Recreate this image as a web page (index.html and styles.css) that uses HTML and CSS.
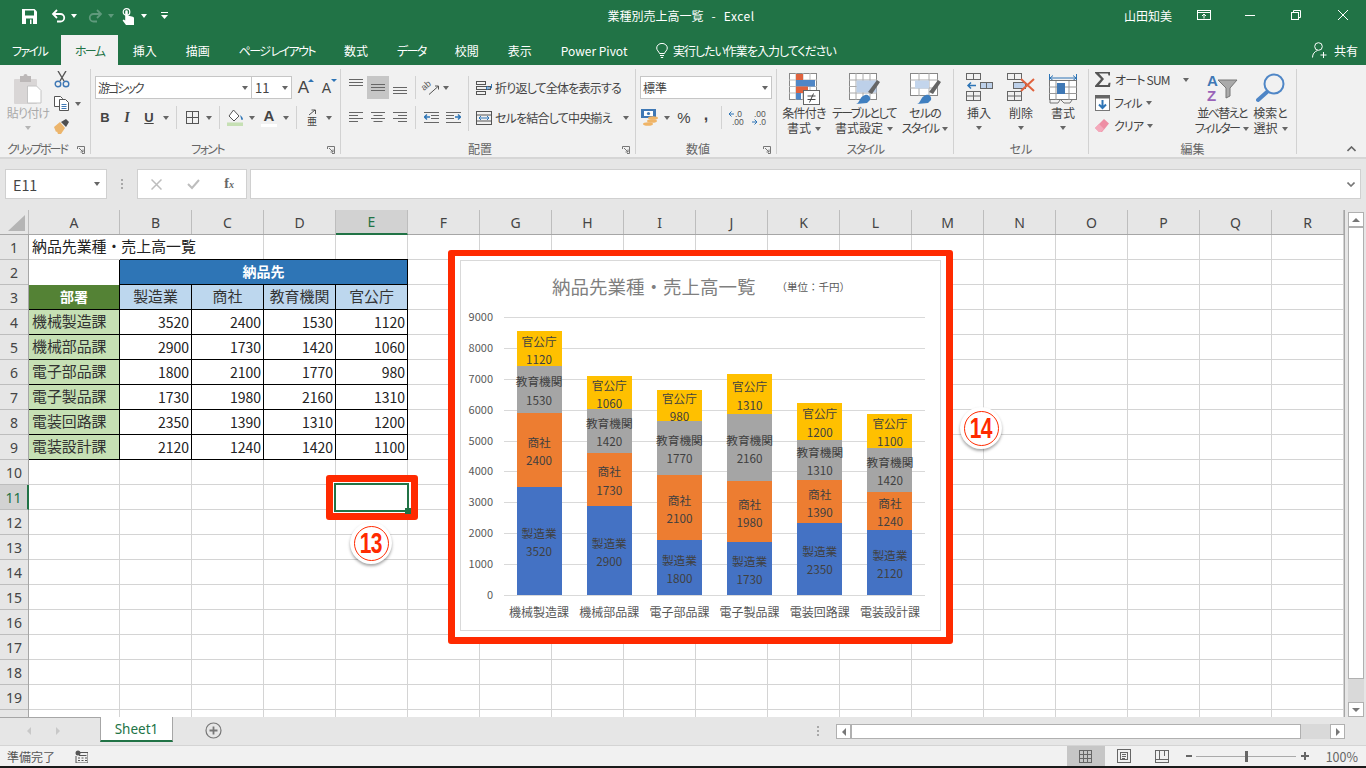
FILE: index.html
```html
<!DOCTYPE html>
<html lang="ja">
<head>
    <meta charset="UTF-8">
    <title>業種別売上高一覧 - Excel</title>
    <link rel="stylesheet" href="styles.css">
</head>
<body>
    <!-- title bar -->
    <header class="titlebar">
        <div class="qat">
            <svg class="qat-save" width="15" height="15" viewBox="0 0 15 15"><path d="M0 0h12.500L15 2.500V15H0z" fill="#fff"/><rect x="3" y="1.500" width="9" height="5" fill="#217346"/><rect x="4" y="9.500" width="7" height="5.500" fill="#217346"/><rect x="8" y="10.500" width="1.500" height="4.500" fill="#fff"/></svg>
            <svg class="qat-undo" width="15" height="14" viewBox="0 0 15 14" fill="none" stroke="#fff" stroke-width="1.8"><path d="M2 5h7.500a3.700 3.700 0 0 1 0 7.500H6"/><path d="M6 1 2 5l4 4"/></svg>
            <i class="caret caret-white qat-c1"></i>
            <svg class="qat-redo" width="15" height="14" viewBox="0 0 15 14" fill="none" stroke="#5f9a7c" stroke-width="1.8"><path d="M13 5H5.500a3.700 3.700 0 0 0 0 7.500H9"/><path d="m9 1 4 4-4 4"/></svg>
            <i class="caret caret-dim qat-c2"></i>
            <svg class="qat-touch" width="13" height="17" viewBox="0 0 13 17"><circle cx="4.500" cy="4" r="3.300" fill="none" stroke="#fff" stroke-width="1.200"/><path d="M3.200 3.500a1.300 1.300 0 0 1 2.600 0v4l5 1.300a1.500 1.500 0 0 1 1.200 1.500V17H4L.6 12.500l1-1 1.600 1z" fill="#fff"/></svg>
            <i class="caret caret-white qat-c3"></i>
            <svg class="qat-more" width="7" height="8" viewBox="0 0 7 8"><path d="M0 .5h7" stroke="#fff"/><path d="M0 3h7L3.500 7z" fill="#fff"/></svg>
        </div>
        <div class="doc-title">業種別売上高一覧&nbsp;&nbsp; -&nbsp;&nbsp; <span class="title-app">Excel</span></div>
        <div class="win-area">
            <span class="user-name">山田知美</span>
            <svg class="win-btn" width="14" height="10" viewBox="0 0 14 10" fill="none" stroke="#fff"><rect x=".5" y=".5" width="13" height="9"/><path d="M1 2.500h12M7 8.500V4M5 6l2-2 2 2"/></svg>
            <svg class="win-btn" width="10" height="10" viewBox="0 0 10 10"><path d="M0 5.500h10" stroke="#fff"/></svg>
            <svg class="win-btn" width="10" height="10" viewBox="0 0 10 10" fill="none" stroke="#fff"><rect x=".5" y="2.500" width="7" height="7"/><path d="M2.500 2.500v-2h7v7h-2"/></svg>
            <svg class="win-btn" width="10" height="10" viewBox="0 0 10 10" fill="none" stroke="#fff"><path d="m0 0 10 10M10 0 0 10"/></svg>
        </div>
    </header>

    <!-- ribbon tabs -->
    <nav class="tabs">
        <span class="tab tab-file k1">ファイル</span>
        <span class="tab tab-active k1">ホーム</span>
        <span class="tab">挿入</span>
        <span class="tab">描画</span>
        <span class="tab k1">ページ レイアウト</span>
        <span class="tab">数式</span>
        <span class="tab k1">データ</span>
        <span class="tab">校閲</span>
        <span class="tab">表示</span>
        <span class="tab">Power Pivot</span>
        <span class="tell-me">
            <svg width="12" height="15" viewBox="0 0 12 15" fill="none" stroke="#fff"><path d="M3.500 10.500C3 8.500.7 7.500.7 5a5.300 4.600 0 0 1 10.600 0c0 2.500-2.300 3.500-2.800 5.500zM4 12.500h4M4.800 14.500h2.400"/></svg>
            <span>実行したい作業を入力してください</span>
        </span>
        <span class="share">
            <svg width="15" height="16" viewBox="0 0 15 16" fill="none" stroke="#fff"><circle cx="6.500" cy="4.500" r="3.800"/><path d="M.5 15.500c0-3.500 2-6 5-7M11.500 10v6M8.500 13h6"/></svg>
            共有
        </span>
    </nav>

    <!-- ribbon -->
    <section class="ribbon">
        <div class="group g-clip has-launcher">
            <div class="group-body">
                <div class="big-btn paste-btn">
                    <svg width="30" height="33" viewBox="0 0 30 33"><rect x="1" y="6" width="23" height="25" rx="1" fill="#d9d6d6"/><rect x="7" y="3" width="11" height="6" fill="#bcb8b8"/><circle cx="12.500" cy="3" r="2" fill="#bcb8b8"/><path d="M14.500 13h9l4.500 4.500V30h-13.500z" fill="#fff" stroke="#c4c4c4"/></svg>
                    <span class="k2">貼り付け</span>
                    <i class="caret caret-dim-gray"></i>
                </div>
                <div class="clip-tools">
                    <svg width="16" height="17" viewBox="0 0 16 17" fill="none"><path d="M4 0l6 10M12 0 6 10" stroke="#555" stroke-width="1.400"/><circle cx="4" cy="13" r="2.800" stroke="#3f78b5" stroke-width="1.400"/><circle cx="12" cy="13" r="2.800" stroke="#3f78b5" stroke-width="1.400"/></svg>
                    <span class="clip-copy">
                        <svg width="16" height="15" viewBox="0 0 16 15" fill="#fff" stroke="#555"><path d="M.5.500h6l2 2v8h-8z"/><path d="M5.500 3.500h6l3 3v8h-9z"/><path d="M7.500 8.500h5M7.500 10.500h5M7.500 12.500h5" fill="none" stroke="#3f78b5"/></svg>
                        <i class="caret"></i>
                    </span>
                    <svg width="16" height="15" viewBox="0 0 16 15"><path d="M0 8 6 3l5 6-4 6H4L3 12.500 2 13z" fill="#ecb56c"/><path d="M7 3l5-3 3 3-3 5z" fill="#4f4f4f"/></svg>
                </div>
            </div>
            <div class="group-label"><span class="k0">クリップボード</span><svg class="launcher" width="8" height="8" viewBox="0 0 8 8" fill="none" stroke="#777"><path d="M.5 3V.5H7.500V7.500H5M2 2l4 4M3.500 6H6V3.500"/></svg></div>
        </div>

        <div class="group g-font has-launcher">
            <div class="group-body">
                <div class="font-row">
                    <div class="combo combo-font"><span class="k0">游ゴシック</span><i class="caret"></i></div>
                    <div class="combo combo-size">11<i class="caret"></i></div>
                    <span class="tool size-up">A<i class="tri tri-up"></i></span>
                    <span class="tool size-down">A<i class="tri tri-down"></i></span>
                </div>
                <div class="tool-row">
                    <span class="tool fmt-b">B</span>
                    <span class="tool fmt-i">I</span>
                    <span class="tool fmt-u">U</span>
                    <span class="caret-tool"><i class="caret"></i></span>
                    <i class="sep"></i>
                    <span class="tool"><svg width="13" height="13" viewBox="0 0 13 13" fill="none" stroke="#555"><rect x=".5" y=".5" width="12" height="12"/><path d="M6.500 0v13M0 6.500h13"/></svg></span>
                    <span class="caret-tool"><i class="caret"></i></span>
                    <i class="sep"></i>
                    <span class="tool"><svg width="17" height="17" viewBox="0 0 17 17"><path d="M6.500 1 12 7l-5 5-5-5z" fill="#fff" stroke="#555"/><path d="M13 6c2 1.500 3 3 3 4.500l-1.500.5z" fill="#2e75b6"/><rect y="13.500" width="16" height="3.500" fill="#c6e0b4"/></svg></span>
                    <span class="caret-tool"><i class="caret"></i></span>
                    <span class="tool font-a">A</span>
                    <span class="caret-tool"><i class="caret"></i></span>
                    <i class="sep"></i>
                    <span class="tool phonetic"><svg width="9" height="7" viewBox="0 0 9 7" fill="none" stroke="#555"><path d="M1 6 7 1M3.500 1H7.500V5"/></svg><b>亜</b></span>
                    <span class="caret-tool"><i class="caret"></i></span>
                </div>
            </div>
            <div class="group-label"><span class="k1">フォント</span><svg class="launcher" width="8" height="8" viewBox="0 0 8 8" fill="none" stroke="#777"><path d="M.5 3V.5H7.500V7.500H5M2 2l4 4M3.500 6H6V3.500"/></svg></div>
        </div>

        <div class="group g-align has-launcher">
            <div class="group-body align-body">
                <div class="align-left">
                    <div class="tool-row">
                        <span class="tool"><svg class="al-top" width="14" height="8" viewBox="0 0 14 8" stroke="#666"><path d="M0 .5h14M0 3.500h14M0 6.500h14"/></svg></span>
                        <span class="tool tool-on"><svg width="14" height="8" viewBox="0 0 14 8" stroke="#666"><path d="M0 .5h14M0 3.500h14M0 6.500h14"/></svg></span>
                        <span class="tool"><svg class="al-bot" width="14" height="8" viewBox="0 0 14 8" stroke="#666"><path d="M0 .5h14M0 3.500h14M0 6.500h14"/></svg></span>
                        <i class="sep"></i>
                        <span class="tool"><svg class="orient-icon" width="18" height="16" viewBox="0 0 18 16"><text class="orient-text" transform="translate(2 11) rotate(-40)">ab</text><path d="M7 14.500 16 6.500M13 6h3.500V9.500" fill="none" stroke="#555"/></svg></span>
                        <span class="caret-tool caret-tool-sm"><i class="caret"></i></span>
                    </div>
                    <div class="tool-row">
                        <span class="tool"><svg width="14" height="11" viewBox="0 0 14 11" stroke="#666"><path d="M0 .5h14M0 3.500h9M0 6.500h14M0 9.500h9"/></svg></span>
                        <span class="tool"><svg width="14" height="11" viewBox="0 0 14 11" stroke="#666"><path d="M0 .5h14M2.500 3.500h9M0 6.500h14M2.500 9.500h9"/></svg></span>
                        <span class="tool"><svg width="14" height="11" viewBox="0 0 14 11" stroke="#666"><path d="M0 .5h14M5 3.500h9M0 6.500h14M5 9.500h9"/></svg></span>
                        <i class="sep"></i>
                        <span class="tool"><svg width="15" height="12" viewBox="0 0 15 12"><path d="M0 .5h15M7 3.500h8M7 6.500h8M0 10.500h15" stroke="#666"/><path d="M0 5h6M3 2.500 .5 5 3 7.500" fill="none" stroke="#2e75b6" stroke-width="1.400"/></svg></span>
                        <span class="tool"><svg width="15" height="12" viewBox="0 0 15 12"><path d="M0 .5h15M0 3.500h8M0 6.500h8M0 10.500h15" stroke="#666"/><path d="M9 5h6M12 2.500 14.500 5 12 7.500" fill="none" stroke="#2e75b6" stroke-width="1.400"/></svg></span>
                    </div>
                </div>
                <div class="align-right">
                    <div class="wrap-row">
                        <svg width="16" height="14" viewBox="0 0 16 14" fill="none" stroke="#555"><rect x=".5" y=".5" width="9" height="3"/><rect x=".5" y="5.500" width="14" height="3"/><rect x=".5" y="10.500" width="9" height="3"/><path d="M15.500 3v4H10M12 5l-2 2 2 2" stroke="#2e75b6"/></svg>
                        <span class="k2">折り返して全体を表示する</span>
                    </div>
                    <div class="wrap-row">
                        <svg width="16" height="14" viewBox="0 0 16 14" fill="none" stroke="#555"><rect x=".5" y=".5" width="15" height="13"/><path d="M0 4h16M0 10h16"/><path d="M3 7h10M5 5l-2 2 2 2M11 5l2 2-2 2" stroke="#2e75b6"/></svg>
                        <span class="k2">セルを結合して中央揃え</span>
                        <i class="caret merge-caret"></i>
                    </div>
                </div>
            </div>
            <div class="group-label">配置<svg class="launcher" width="8" height="8" viewBox="0 0 8 8" fill="none" stroke="#777"><path d="M.5 3V.5H7.500V7.500H5M2 2l4 4M3.500 6H6V3.500"/></svg></div>
        </div>

        <div class="group g-num has-launcher">
            <div class="group-body">
                <div class="font-row">
                    <div class="combo combo-num">標準<i class="caret"></i></div>
                </div>
                <div class="tool-row">
                    <span class="tool"><svg width="18" height="17" viewBox="0 0 18 17"><rect width="15" height="9" fill="#3f78b5"/><rect x="3" y="2" width="9" height="5" fill="#fff"/><circle cx="7.500" cy="4.500" r="1.600" fill="#3f78b5"/><ellipse cx="12" cy="9" rx="5" ry="1.800" fill="#efb467"/><ellipse cx="11" cy="12" rx="5" ry="1.800" fill="#efb467"/><ellipse cx="7" cy="15" rx="5" ry="1.800" fill="#efb467"/></svg></span>
                    <span class="caret-tool"><i class="caret"></i></span>
                    <span class="tool fmt-pct">%</span>
                    <span class="tool fmt-comma">,</span>
                    <i class="sep"></i>
                    <span class="tool"><svg width="18" height="16" viewBox="0 0 18 16"><text class="dec-text" x="7" y="7">.0</text><text class="dec-text" x="4" y="15">.00</text><path d="M6 4H1M3.500 1.500 1 4l2.500 2.500" fill="none" stroke="#2e75b6"/></svg></span>
                    <span class="tool"><svg width="18" height="16" viewBox="0 0 18 16"><text class="dec-text" x="4" y="7">.00</text><text class="dec-text" x="9" y="15">.0</text><path d="M2 12h5M4.500 9.500 7 12l-2.500 2.500" fill="none" stroke="#2e75b6"/></svg></span>
                </div>
            </div>
            <div class="group-label">数値<svg class="launcher" width="8" height="8" viewBox="0 0 8 8" fill="none" stroke="#777"><path d="M.5 3V.5H7.500V7.500H5M2 2l4 4M3.500 6H6V3.500"/></svg></div>
        </div>

        <div class="group g-style">
            <div class="group-body">
                <div class="big-btn btn-56">
                    <svg width="31" height="33" viewBox="0 0 31 33" fill="none"><rect x=".5" y=".5" width="27" height="26" fill="#fff" stroke="#888"/><path d="M7 0v27M14 0v27M21 0v27M0 7h28M0 13.500h28M0 20h28" stroke="#bbb"/><rect x="7" y="1" width="7" height="6" fill="#e0623d"/><rect x="7" y="7" width="19" height="6.500" fill="#4f86c6"/><rect x="7" y="13.500" width="12" height="6.500" fill="#e0623d"/><rect x="7" y="20" width="5" height="6.500" fill="#4f86c6"/><rect x="14.500" y="17.500" width="16" height="14" fill="#fff" stroke="#666"/><path d="M18.500 23h8M18.500 26.500h8M24.500 20.500l-4 9" stroke="#444"/></svg>
                    <span class="k2">条件付き</span>
                    <span>書式<i class="caret"></i></span>
                </div>
                <div class="big-btn btn-64">
                    <svg width="31" height="33" viewBox="0 0 31 33" fill="none"><rect x=".5" y=".5" width="27" height="26" fill="#fff" stroke="#888"/><path d="M7 0v27M14 0v27M21 0v27M0 7h28M0 13.500h28M0 20h28" stroke="#aaa"/><rect x="7.500" y="7.500" width="20" height="12" fill="#bdd0e9"/><path d="M19 19 28 7l3 2-8 12z" fill="#666"/><path d="M7 31c4-1 3-7 9-9 3-1 6 2 5 5l-3 3z" fill="#3f7fc0"/></svg>
                    <span class="k1">テーブルとして</span>
                    <span>書式設定<i class="caret"></i></span>
                </div>
                <div class="big-btn btn-56">
                    <svg width="31" height="33" viewBox="0 0 31 33" fill="none"><rect x=".5" y=".5" width="27" height="22" fill="#fff" stroke="#888"/><path d="M9 0v23M19 0v23M0 7h28M0 15h28" stroke="#aaa"/><rect x="5" y="7.500" width="14" height="8" fill="#c3d5ec"/><path d="M19 19 28 7l3 2-8 12z" fill="#666"/><path d="M7 31c4-1 3-7 9-9 3-1 6 2 5 5l-3 3z" fill="#3f7fc0"/></svg>
                    <span class="k2">セルの</span>
                    <span class="k1">スタイル<i class="caret"></i></span>
                </div>
            </div>
            <div class="group-label"><span class="k1">スタイル</span></div>
        </div>

        <div class="group g-cells">
            <div class="group-body">
                <div class="big-btn btn-42">
                    <svg width="27" height="33" viewBox="0 0 27 33" fill="none" stroke="#666"><rect x=".5" y=".5" width="14" height="6"/><path d="M7.500 0v7"/><rect x=".5" y="18.500" width="14" height="9"/><path d="M7.500 18v10M0 23h15"/><rect x="14.500" y="9.500" width="12" height="6" fill="#bdd0e9"/><path d="M20.500 9v7"/><path d="M2 12.500h8M5 9.500l-3 3 3 3" stroke="#2e75b6" stroke-width="1.500"/></svg>
                    <span>挿入</span>
                    <i class="caret"></i>
                </div>
                <div class="big-btn btn-42">
                    <svg width="29" height="33" viewBox="0 0 29 33" fill="none" stroke="#666"><rect x=".5" y=".5" width="14" height="6"/><path d="M7.500 0v7"/><rect x=".5" y="18.500" width="14" height="9"/><path d="M7.500 18v10M0 23h15"/><rect x="6.500" y="9.500" width="12" height="6" fill="#bdd0e9"/><path d="m14 6 13 12M27 6 14 18" stroke="#e0623d" stroke-width="2"/></svg>
                    <span>削除</span>
                    <i class="caret"></i>
                </div>
                <div class="big-btn btn-42">
                    <svg width="28" height="33" viewBox="0 0 28 33" fill="none"><path d="M1 5h26M4 2.500 1 5l3 2.500M24 2.500 27 5l-3 2.500M.5 1v8M27.500 1v8" stroke="#2e75b6"/><rect x=".5" y="7.500" width="27" height="19" fill="#fff" stroke="#777"/><path d="M7 8v19M20 8v19M0 14h28M0 20.500h28" stroke="#999"/><rect x="8" y="10" width="8" height="11" fill="#3f78b5"/><path d="M1 27v3h8l2-3M12 27l3 3h6l2-3" stroke="#777"/></svg>
                    <span>書式</span>
                    <i class="caret"></i>
                </div>
            </div>
            <div class="group-label">セル</div>
        </div>

        <div class="group g-edit">
            <div class="group-body">
                <div class="edit-list">
                    <div class="edit-row">
                        <svg width="16" height="15" viewBox="0 0 16 15"><path d="M0 0h15v3.500h-1.500l-.5-2H4l5 5.500-5 6h9l.7-2.200H15.500L15 15H0v-1.200L6 7 0 1z" fill="#555"/></svg>
                        <span class="k2">オート SUM</span><i class="caret sum-caret"></i>
                    </div>
                    <div class="edit-row">
                        <svg width="15" height="16" viewBox="0 0 15 16"><rect x=".5" y=".5" width="14" height="15" fill="#fff" stroke="#777"/><rect width="15" height="3.500" fill="#666"/><path d="M7.500 5v8M4 9.500 7.500 13l3.500-3.500" fill="none" stroke="#2e75b6" stroke-width="2"/></svg>
                        <span class="k2">フィル</span><i class="caret"></i>
                    </div>
                    <div class="edit-row">
                        <svg width="15" height="14" viewBox="0 0 15 14"><path d="m0 9 9-9 5 4.500-7 8.500H4z" fill="#ee8ea4"/><path d="m0 9 4-4 5 5-3 3H4z" fill="#f4a9bb"/></svg>
                        <span class="k2">クリア</span><i class="caret"></i>
                    </div>
                </div>
                <div class="big-btn btn-50">
                    <svg width="32" height="33" viewBox="0 0 32 33"><text class="sort-a" x="1" y="13">A</text><text class="sort-z" x="1" y="28">Z</text><path d="M12 7h19l-7 8v8l-4 2V15z" fill="#aaa" stroke="#777"/></svg>
                    <span class="k1">並べ替えと</span>
                    <span class="k1">フィルター<i class="caret"></i></span>
                </div>
                <div class="big-btn btn-47">
                    <svg width="29" height="33" viewBox="0 0 29 33" fill="none" stroke="#4f86c6"><circle cx="18" cy="11" r="9.500" stroke-width="2"/><path d="m11 19-9 8" stroke-width="4" stroke-linecap="round"/></svg>
                    <span>検索と</span>
                    <span>選択<i class="caret"></i></span>
                </div>
            </div>
            <div class="group-label">編集</div>
        </div>

        <svg class="collapse" width="9" height="6" viewBox="0 0 9 6" fill="none" stroke="#666" stroke-width="1.600"><path d="m.5 5 4-4 4 4"/></svg>
    </section>

    <!-- formula bar -->
    <section class="formula-bar">
        <div class="name-box">E11<i class="caret"></i></div>
        <div class="fbar-dots"><i></i><i></i><i></i></div>
        <div class="fbar-btns">
            <svg width="11" height="11" viewBox="0 0 11 11" fill="none" stroke="#bdbdbd" stroke-width="1.500"><path d="m.5.500 10 10M10.500.500l-10 10"/></svg>
            <svg width="13" height="11" viewBox="0 0 13 11" fill="none" stroke="#bdbdbd" stroke-width="2"><path d="m1 5 4 4 7-8"/></svg>
            <span class="fx"><i>f</i><small>x</small></span>
        </div>
        <div class="formula-input"><svg width="8" height="5" viewBox="0 0 8 5" fill="none" stroke="#777" stroke-width="1.600"><path d="m.5.500 3.500 3.500 3.500-3.500"/></svg></div>
    </section>

    <!-- sheet -->
    <section class="sheet">
        <div class="sheet-main">
            <div class="col-heads">
                <div class="corner"><svg width="17" height="16" viewBox="0 0 17 16"><path d="M17 0v16H0z" fill="#b5b5b5"/></svg></div>
                <span class="col-a">A</span><span>B</span><span>C</span><span>D</span><span class="col-on">E</span><span>F</span><span>G</span><span>H</span><span>I</span><span>J</span><span>K</span><span>L</span><span>M</span><span>N</span><span>O</span><span>P</span><span>Q</span><span>R</span>
            </div>
            <div class="sheet-body">
                <div class="row-heads">
                    <span>1</span><span>2</span><span>3</span><span>4</span><span>5</span><span>6</span><span>7</span><span>8</span><span>9</span><span>10</span><span class="row-on">11</span><span>12</span><span>13</span><span>14</span><span>15</span><span>16</span><span>17</span><span>18</span><span>19</span><span>20</span>
                </div>
                <div class="cells">
                    <div class="data-grid">
                        <div class="c-title">納品先業種・売上高一覧</div>
                        <div></div>
                        <div></div>
                        <div class="c-blank"></div>
                        <div class="c-top">納品先</div>
                        <div class="c-dept">部署</div>
                        <div class="c-sub">製造業</div><div class="c-sub">商社</div><div class="c-sub">教育機関</div><div class="c-sub">官公庁</div>
                        <div class="c-name">機械製造課</div><div class="c-num">3520</div><div class="c-num">2400</div><div class="c-num">1530</div><div class="c-num">1120</div>
                        <div class="c-name">機械部品課</div><div class="c-num">2900</div><div class="c-num">1730</div><div class="c-num">1420</div><div class="c-num">1060</div>
                        <div class="c-name">電子部品課</div><div class="c-num">1800</div><div class="c-num">2100</div><div class="c-num">1770</div><div class="c-num">980</div>
                        <div class="c-name">電子製品課</div><div class="c-num">1730</div><div class="c-num">1980</div><div class="c-num">2160</div><div class="c-num">1310</div>
                        <div class="c-name">電装回路課</div><div class="c-num">2350</div><div class="c-num">1390</div><div class="c-num">1310</div><div class="c-num">1200</div>
                        <div class="c-name">電装設計課</div><div class="c-num">2120</div><div class="c-num">1240</div><div class="c-num">1420</div><div class="c-num">1100</div>
                    </div>
                </div>
            </div>
        </div>
        <div class="vscroll">
            <span class="sb-btn"><i class="tri tri-up gray"></i></span>
            <span class="sb-thumb"></span>
            <span class="sb-track"></span>
            <span class="sb-btn"><i class="tri tri-down gray"></i></span>
        </div>
    </section>

    <!-- sheet tabs and horizontal scroll -->
    <section class="sheetbar">
        <div class="sheet-nav"><i class="tri tri-left dim"></i><i class="tri tri-right dim"></i></div>
        <div class="sheet-tab">Sheet1</div>
        <svg class="add-sheet" width="17" height="17" viewBox="0 0 17 17" fill="none" stroke="#777"><circle cx="8.500" cy="8.500" r="7.500" stroke-width="1.200"/><path d="M8.500 4.500v8M4.500 8.500h8" stroke-width="1.800"/></svg>
        <div class="fbar-dots bar-dots"><i></i><i></i><i></i></div>
        <div class="hscroll">
            <span class="sb-btn"><i class="tri tri-left gray"></i></span>
            <span class="sb-thumb"></span>
            <span class="sb-track"></span>
            <span class="sb-btn"><i class="tri tri-right gray"></i></span>
        </div>
    </section>

    <!-- status bar -->
    <footer class="statusbar">
        <span class="status-text">準備完了</span>
        <svg class="macro-icon" width="13" height="13" viewBox="0 0 13 13"><circle cx="3" cy="3" r="2.500" fill="#555"/><path d="M4 2.500h9V13H1V6" fill="none" stroke="#555"/><path d="M4 5.500h7.500M3 8h2M6.500 8h2M10 8h2M3 10.500h2M6.500 10.500h2M10 10.500h2" stroke="#555"/></svg>
        <div class="view-btns">
            <span class="view-btn view-on"><svg width="13" height="13" viewBox="0 0 13 13" fill="none" stroke="#666"><rect x=".5" y=".5" width="12" height="12"/><path d="M4.500 0v13M8.500 0v13M0 4.500h13M0 8.500h13"/></svg></span>
            <span class="view-btn"><svg width="14" height="14" viewBox="0 0 14 14" fill="none" stroke="#666"><rect x=".5" y=".5" width="13" height="13"/><rect x="3.500" y="3.500" width="7" height="7"/><path d="M5 5.500h4M5 7.500h4M5 9.500h3"/></svg></span>
            <span class="view-btn"><svg width="14" height="13" viewBox="0 0 14 13" fill="none" stroke="#666"><rect x=".5" y=".5" width="13" height="12"/><path d="M0 9.500h14M4.500 0v9M9.500 0v6"/></svg></span>
        </div>
        <div class="zoom-ctl">
            <i class="zoom-minus"></i>
            <div class="zoom-track"><i></i></div>
            <i class="zoom-plus"></i>
            <span class="zoom-val">100%</span>
        </div>
    </footer>

    <!-- annotation over the selected cell -->
    <div class="cell-frame"><div class="cell-select"><i></i></div></div>
    <div class="badge badge-13"><span><b>13</b></span></div>

    <!-- embedded chart with its annotation -->
    <div class="chart-frame">
        <div class="chart">
            <div class="chart-title">納品先業種・売上高一覧<small>（単位：千円）</small></div>
            <div class="chart-body">
                <div class="axis">
                    <span>9000</span><span>8000</span><span>7000</span><span>6000</span><span>5000</span><span>4000</span><span>3000</span><span>2000</span><span>1000</span><span>0</span>
                </div>
                <div class="plot">
                    <div class="gridlines"><i></i><i></i><i></i><i></i><i></i><i></i><i></i><i></i><i></i><i></i></div>
                    <div class="bars">
                        <div class="bar"><div class="stack">
                            <div class="seg seg-mfg" style="height:39.11%">製造業<br>3520</div>
                            <div class="seg seg-trade" style="height:26.67%">商社<br>2400</div>
                            <div class="seg seg-edu" style="height:17%">教育機関<br>1530</div>
                            <div class="seg seg-gov" style="height:12.44%">官公庁<br>1120</div>
                        </div></div>
                        <div class="bar"><div class="stack">
                            <div class="seg seg-mfg" style="height:32.22%">製造業<br>2900</div>
                            <div class="seg seg-trade" style="height:19.22%">商社<br>1730</div>
                            <div class="seg seg-edu" style="height:15.78%">教育機関<br>1420</div>
                            <div class="seg seg-gov" style="height:11.78%">官公庁<br>1060</div>
                        </div></div>
                        <div class="bar"><div class="stack">
                            <div class="seg seg-mfg" style="height:20%">製造業<br>1800</div>
                            <div class="seg seg-trade" style="height:23.33%">商社<br>2100</div>
                            <div class="seg seg-edu" style="height:19.67%">教育機関<br>1770</div>
                            <div class="seg seg-gov" style="height:10.89%">官公庁<br>980</div>
                        </div></div>
                        <div class="bar"><div class="stack">
                            <div class="seg seg-mfg" style="height:19.22%">製造業<br>1730</div>
                            <div class="seg seg-trade" style="height:22%">商社<br>1980</div>
                            <div class="seg seg-edu" style="height:24%">教育機関<br>2160</div>
                            <div class="seg seg-gov" style="height:14.56%">官公庁<br>1310</div>
                        </div></div>
                        <div class="bar"><div class="stack">
                            <div class="seg seg-mfg" style="height:26.11%">製造業<br>2350</div>
                            <div class="seg seg-trade" style="height:15.44%">商社<br>1390</div>
                            <div class="seg seg-edu" style="height:14.56%">教育機関<br>1310</div>
                            <div class="seg seg-gov" style="height:13.33%">官公庁<br>1200</div>
                        </div></div>
                        <div class="bar"><div class="stack">
                            <div class="seg seg-mfg" style="height:23.56%">製造業<br>2120</div>
                            <div class="seg seg-trade" style="height:13.78%">商社<br>1240</div>
                            <div class="seg seg-edu" style="height:15.78%">教育機関<br>1420</div>
                            <div class="seg seg-gov" style="height:12.22%">官公庁<br>1100</div>
                        </div></div>
                    </div>
                </div>
                <div class="cats">
                    <span>機械製造課</span><span>機械部品課</span><span>電子部品課</span><span>電子製品課</span><span>電装回路課</span><span>電装設計課</span>
                </div>
            </div>
        </div>
    </div>
    <div class="badge badge-14"><span><b>14</b></span></div>
</body>
</html>
```

FILE: styles.css
```css
* {
    box-sizing: border-box;
}

body {
    margin: 0;
    width: 1366px;
    height: 768px;
    overflow: hidden;
    position: relative;
    display: flex;
    flex-direction: column;
    font-family: "Noto Sans CJK JP", "Noto Sans", sans-serif;
    font-feature-settings: "palt";
    font-size: 12px;
    color: #444;
    background-color: #e6e6e6;
}

i {
    font-style: normal;
}

svg {
    display: block;
    flex-shrink: 0;
}

/* the UI font has narrower kana than ours */
.k0 {
    letter-spacing: -2px;
}

.k1 {
    letter-spacing: -1.6px;
}

.k2 {
    letter-spacing: -0.8px;
}

/* little carets and triangles */
.caret {
    display: inline-block;
    width: 0;
    height: 0;
    border-left: 3.5px solid transparent;
    border-right: 3.5px solid transparent;
    border-top: 4px solid #666;
}

.caret-white {
    border-top-color: #fff;
}

.caret-dim {
    border-top-color: #5f9a7c;
}

.caret-dim-gray {
    border-top-color: #b5b5b5;
}

.tri {
    display: block;
    width: 0;
    height: 0;
}

.tri-up {
    border-left: 4px solid transparent;
    border-right: 4px solid transparent;
    border-bottom: 4px solid #2e75b6;
}

.tri-down {
    border-left: 4px solid transparent;
    border-right: 4px solid transparent;
    border-top: 4px solid #2e75b6;
}

.tri-left {
    border-top: 4px solid transparent;
    border-bottom: 4px solid transparent;
    border-right: 4px solid #777;
}

.tri-right {
    border-top: 4px solid transparent;
    border-bottom: 4px solid transparent;
    border-left: 4px solid #777;
}

.tri-up.gray {
    border-bottom-color: #777;
}

.tri-down.gray {
    border-top-color: #777;
}

.tri-left.dim {
    border-right-color: #c8c8c8;
}

.tri-right.dim {
    border-left-color: #c8c8c8;
}

/* title bar */
.titlebar {
    height: 35px;
    flex-shrink: 0;
    display: grid;
    grid-template-columns: 1fr auto 1fr;
    align-items: center;
    background-color: #217346;
    color: #fff;
}

.qat {
    display: flex;
    align-items: center;
    padding-left: 22px;
    padding-bottom: 3px;
}

.qat-undo {
    margin-left: 14px;
}

.qat-c1 {
    margin-left: 5px;
}

.qat-redo {
    margin-left: 11px;
}

.qat-c2 {
    margin-left: 5px;
}

.qat-touch {
    margin-left: 8px;
}

.qat-c3 {
    margin-left: 6px;
}

.qat-more {
    margin-left: 14px;
}

.doc-title {
    font-size: 12px;
    padding-bottom: 4px;
    padding-right: 4px;
    white-space: nowrap;
}

.title-app {
    letter-spacing: 0.5px;
}

.win-area {
    display: flex;
    align-items: center;
    justify-content: flex-end;
    padding-bottom: 5px;
    padding-right: 18px;
}

.user-name {
    margin-right: 25px;
}

.win-btn {
    margin-right: 36px;
}

.win-btn:nth-of-type(1) {
    margin-right: 34px;
}

.win-btn:nth-of-type(3) {
    margin-right: 37px;
}

.win-btn:last-child {
    margin-right: 0;
}

/* tabs */
.tabs {
    height: 30px;
    flex-shrink: 0;
    display: flex;
    align-items: stretch;
    background-color: #217346;
    color: #fff;
    white-space: nowrap;
}

.tab {
    display: flex;
    align-items: center;
    padding: 0 14.5px;
}

.tab-file {
    padding: 0 14px 0 12px;
}

.tab-active {
    width: 57px;
    padding: 0;
    justify-content: center;
    background-color: #f1f1f1;
    color: #217346;
}

.tell-me {
    display: flex;
    align-items: center;
    gap: 5px;
    margin-left: 14px;
    letter-spacing: -1px;
}

.share {
    display: flex;
    align-items: center;
    gap: 7px;
    margin-left: auto;
    padding-right: 8px;
}

/* ribbon */
.ribbon {
    height: 94px;
    flex-shrink: 0;
    display: flex;
    position: relative;
    padding-top: 4px;
    background-color: #f1f1f1;
    border-bottom: 2px solid #d6d6d6;
}

.group {
    height: 85px;
    display: flex;
    flex-direction: column;
    border-right: 1px solid #d2d2d2;
    white-space: nowrap;
}

.g-clip {
    width: 91px;
}

.g-font {
    width: 250px;
}

.g-align {
    width: 295px;
}

.g-num {
    width: 141px;
}

.g-style {
    width: 177px;
}

.g-cells {
    width: 135px;
}

.g-edit {
    width: 208px;
}

.group-body {
    flex: 1;
    min-height: 0;
    padding-top: 7px;
}

.g-clip .group-body,
.g-style .group-body,
.g-cells .group-body,
.g-edit .group-body,
.align-body {
    display: flex;
}

.g-cells .group-body {
    padding-left: 4px;
}

.g-style .btn-56:first-child {
    margin-left: -1px;
}

.g-style .btn-64 {
    margin-right: 1px;
}

.group-label {
    position: relative;
    height: 14px;
    margin-bottom: -2px;
    line-height: 14px;
    text-align: center;
    color: #666;
}

.has-launcher .group-label {
    padding-right: 16px;
}

.launcher {
    position: absolute;
    right: 5px;
    top: 4px;
}

.big-btn {
    flex-shrink: 0;
    display: flex;
    flex-direction: column;
    align-items: center;
    margin-top: -3px;
    line-height: 14.5px;
}

.big-btn > .caret {
    margin-top: 5px;
}

.big-btn span .caret {
    margin-left: 4px;
    vertical-align: middle;
}

.btn-56 {
    width: 56px;
}

.btn-64 {
    width: 64px;
}

.btn-42 {
    width: 42px;
}

.btn-50 {
    width: 50px;
}

.btn-47 {
    width: 47px;
}

.paste-btn {
    width: 50px;
    margin-left: 3px;
    color: #a9a9a9;
}

.clip-tools {
    display: flex;
    flex-direction: column;
    gap: 8px;
    margin-top: -5px;
    padding-left: 1px;
}

.clip-copy {
    display: flex;
    align-items: center;
    gap: 5px;
}

.font-row {
    display: flex;
    align-items: center;
    height: 23px;
    padding-left: 4px;
}

.combo {
    position: relative;
    height: 23px;
    display: flex;
    align-items: center;
    justify-content: space-between;
    padding: 0 3px 0 2px;
    background-color: #fff;
    border: 1px solid #c6c6c6;
}

.combo-font {
    width: 157px;
}

.combo-size {
    width: 41px;
    margin-left: -1px;
    padding: 0 3px 0 3px;
    font-size: 13px;
}

.combo-num {
    width: 132px;
}

.tool-row {
    display: flex;
    align-items: center;
    height: 23px;
    margin-top: 7px;
    padding-left: 3px;
}

.tool {
    position: relative;
    width: 22px;
    height: 23px;
    flex-shrink: 0;
    display: flex;
    align-items: center;
    justify-content: center;
    font-family: "Liberation Sans", sans-serif;
}

.tool-on {
    background-color: #c6c6c6;
}

.caret-tool {
    width: 12px;
    flex-shrink: 0;
    display: flex;
    justify-content: center;
}

.caret-tool-sm {
    width: 8px;
}

.sep {
    width: 1px;
    height: 23px;
    flex-shrink: 0;
    margin: 0 4px;
    background-color: #d2d2d2;
}

.size-up, .size-down {
    width: 23px;
}

.size-up {
    font-size: 17px;
}

.size-down {
    font-size: 14px;
}

.size-up .tri, .size-down .tri {
    position: absolute;
    right: 1px;
    top: 3px;
    border-width: 3px;
}

.size-up .tri {
    border-top-width: 0;
}

.size-down .tri {
    border-bottom-width: 0;
}

.fmt-b {
    font-weight: bold;
    font-size: 13px;
}

.fmt-i {
    font-family: "Liberation Serif", serif;
    font-style: italic;
    font-weight: bold;
    font-size: 14px;
}

.fmt-u {
    font-weight: bold;
    font-size: 13px;
    text-decoration: underline;
}

.font-a {
    font-weight: bold;
    font-size: 15px;
    padding-bottom: 4px;
    background: linear-gradient(#fff, #fff) center 18px / 16px 3px no-repeat;
}

.phonetic {
    flex-direction: column;
    line-height: 1;
}

.phonetic b {
    font-family: "Noto Sans CJK JP", sans-serif;
    font-weight: normal;
    font-size: 10px;
}

.al-top {
    margin-bottom: 9px;
}

.al-bot {
    margin-top: 7px;
}

.orient-icon {
    overflow: visible;
}

.orient-text {
    font-family: "Liberation Sans", sans-serif;
    font-size: 9px;
    fill: #555;
}

.align-left {
    width: 127px;
    flex-shrink: 0;
    padding-left: 1px;
    margin-top: -7px;
}

.align-right {
    display: flex;
    flex-direction: column;
    gap: 7px;
    height: 55px;
    padding-left: 7px;
    border-left: 1px solid #d2d2d2;
}

.wrap-row {
    display: flex;
    align-items: center;
    gap: 3px;
    height: 23px;
}

.merge-caret {
    margin-left: 8px;
}

.fmt-pct {
    font-size: 15px;
}

.fmt-comma {
    font-weight: bold;
    font-size: 16px;
    padding-bottom: 6px;
}

.dec-text {
    font-family: "Liberation Sans", sans-serif;
    font-size: 8.5px;
    fill: #555;
}

.edit-list {
    width: 108px;
    flex-shrink: 0;
    margin-top: -8px;
    padding-left: 6px;
}

.edit-row {
    display: flex;
    align-items: center;
    gap: 4px;
    height: 23px;
}

.sum-caret {
    margin-left: 9px;
}

.sort-a, .sort-z {
    font-family: "Liberation Sans", sans-serif;
    font-weight: bold;
    font-size: 15px;
}

.sort-a {
    fill: #3f78b5;
}

.sort-z {
    fill: #9a63b8;
}

.collapse {
    position: absolute;
    right: 10px;
    bottom: 5px;
}

/* formula bar */
.formula-bar {
    height: 51px;
    flex-shrink: 0;
    display: flex;
    padding: 10px 5px 11px;
    background-color: #e6e6e6;
}

.name-box {
    width: 102px;
    display: flex;
    align-items: center;
    justify-content: space-between;
    padding: 0 6px 0 7px;
    background-color: #fff;
    border: 1px solid #d0d0d0;
    font-size: 14.3px;
}

.fbar-dots {
    width: 30px;
    display: flex;
    flex-direction: column;
    align-items: center;
    justify-content: center;
    gap: 2px;
}

.fbar-dots i {
    width: 2px;
    height: 2px;
    background-color: #a8a8a8;
}

.fbar-btns {
    width: 110px;
    display: flex;
    align-items: center;
    justify-content: space-between;
    padding: 0 12px 0 13px;
    background-color: #fff;
    border: 1px solid #d0d0d0;
}

.fx {
    font-family: "Liberation Serif", serif;
    font-style: italic;
    font-weight: bold;
    font-size: 14px;
    color: #666;
}

.fx small {
    font-size: 10px;
}

.formula-input {
    width: 1111px;
    margin-left: 3px;
    display: flex;
    align-items: center;
    justify-content: flex-end;
    padding-right: 5px;
    background-color: #fff;
    border: 1px solid #d0d0d0;
}

/* sheet */
.sheet {
    height: 507px;
    flex-shrink: 0;
    display: flex;
}

.sheet-main {
    width: 1345px;
    display: flex;
    flex-direction: column;
    border-right: 1px solid #a6a6a6;
}

.col-heads {
    height: 25px;
    flex-shrink: 0;
    display: flex;
    border-bottom: 1px solid #a6a6a6;
}

.col-heads span {
    width: 72px;
    display: flex;
    align-items: center;
    justify-content: center;
    font-family: "Noto Sans", sans-serif;
    font-size: 14px;
    border-right: 1px solid #bdbdbd;
}

.col-heads span.col-a {
    width: 91px;
}

.col-heads span.col-on {
    background-color: #d2d2d2;
    border-bottom: 2px solid #217346;
    margin-bottom: -1px;
    color: #217346;
}

.corner {
    width: 29px;
    display: flex;
    align-items: flex-end;
    justify-content: flex-end;
    padding: 0 3px 3px 0;
    border-right: 1px solid #bdbdbd;
}

.sheet-body {
    flex: 1;
    min-height: 0;
    display: flex;
    overflow: hidden;
}

.row-heads {
    width: 29px;
    flex-shrink: 0;
    display: flex;
    flex-direction: column;
    border-right: 1px solid #a6a6a6;
}

.row-heads span {
    height: 25px;
    flex-shrink: 0;
    display: flex;
    align-items: center;
    justify-content: center;
    font-family: "Noto Sans", sans-serif;
    font-size: 14px;
    border-bottom: 1px solid #bdbdbd;
}

.row-heads span.row-on {
    background-color: #d2d2d2;
    border-right: 2px solid #217346;
    margin-right: -1px;
    color: #217346;
}

/* vertical lines only run right of column A, so that layer starts past it */
.cells {
    flex: 1;
    padding-left: 91px;
    background-color: #fff;
    background-image:
        linear-gradient(to right, transparent 71px, #d4d4d4 71px),
        linear-gradient(to bottom, transparent 24px, #d4d4d4 24px),
        linear-gradient(to right, transparent 90px, #d4d4d4 90px);
    background-size: 72px 100%, 100% 25px, 91px 100%;
    background-repeat: repeat-x, repeat-y, no-repeat;
    background-origin: content-box, border-box, border-box;
    background-clip: content-box, border-box, border-box;
}

.data-grid {
    margin-left: -91px;
    display: grid;
    grid-template-columns: 91px repeat(4, 72px);
    grid-auto-rows: 25px;
    width: 379px;
    font-size: 14.9px;
    font-feature-settings: normal;
    color: #222;
}

.data-grid > div {
    display: flex;
    align-items: center;
    padding-bottom: 3px;
    white-space: nowrap;
}

.c-title {
    grid-column: span 3;
    padding-left: 3px;
    background-color: #fff;
    border-right: 1px solid #d4d4d4;
    border-bottom: 1px solid #d4d4d4;
}

.c-blank {
    background-color: #fff;
    border-right: 1px solid #000;
}

.c-top {
    grid-column: span 4;
    justify-content: center;
    background-color: #2e75b6;
    color: #fff;
    font-weight: bold;
    font-size: 14px;
    border-right: 1px solid #000;
    border-bottom: 1px solid #000;
    box-shadow: 0 -1px 0 #000;
}

.c-dept {
    justify-content: center;
    background-color: #548235;
    color: #fff;
    font-weight: bold;
    font-size: 14px;
    border-right: 1px solid #000;
    border-bottom: 1px solid #000;
}

.c-sub {
    justify-content: center;
    background-color: #bdd7ee;
    color: #333;
    border-right: 1px solid #000;
    border-bottom: 1px solid #000;
}

.c-name {
    padding-left: 3px;
    background-color: #c6e0b4;
    color: #333;
    border-right: 1px solid #000;
    border-bottom: 1px solid #000;
}

.data-grid > .c-num {
    justify-content: flex-end;
    padding-right: 2px;
    padding-bottom: 1px;
    background-color: #fff;
    border-right: 1px solid #000;
    border-bottom: 1px solid #000;
    font-size: 14px;
}

/* scrollbars */
.vscroll {
    width: 21px;
    display: flex;
    flex-direction: column;
    padding: 2px 2px 0 3px;
}

.sb-btn {
    height: 15px;
    flex-shrink: 0;
    display: flex;
    align-items: center;
    justify-content: center;
    background-color: #fff;
    border: 1px solid #b0b0b0;
}

.sb-thumb {
    background-color: #fff;
    border: 1px solid #b0b0b0;
}

.sb-track {
    background-color: #d9d9d9;
}

.vscroll .sb-thumb {
    height: 452px;
}

.vscroll .sb-track {
    flex: 1;
}

.sheetbar {
    height: 28px;
    flex-shrink: 0;
    display: flex;
    align-items: flex-start;
    background-color: #e6e6e6;
}

.sheet-nav {
    width: 100px;
    height: 27px;
    display: flex;
    align-items: center;
    gap: 25px;
    padding-left: 27px;
    border-top: 1px solid #a6a6a6;
}

.sheet-tab {
    width: 73px;
    height: 25px;
    display: flex;
    align-items: center;
    justify-content: center;
    background-color: #fff;
    color: #217346;
    font-family: "Noto Sans", sans-serif;
    font-size: 13.5px;
    border-left: 1px solid #a6a6a6;
    border-right: 1px solid #a6a6a6;
    border-bottom: 2px solid #217346;
}

.add-sheet {
    margin: 5px 0 0 32px;
}

.bar-dots {
    width: 10px;
    height: 27px;
    margin-left: 591px;
}

.hscroll {
    width: 509px;
    height: 15px;
    margin: 7px 0 0 13px;
    display: flex;
}

.hscroll .sb-btn {
    width: 15px;
}

.hscroll .sb-thumb {
    width: 450px;
}

.hscroll .sb-track {
    flex: 1;
}

/* status bar */
.statusbar {
    height: 23px;
    flex-shrink: 0;
    display: flex;
    align-items: stretch;
    background-color: #f1f1f1;
    border-top: 1px solid #d4d4d4;
    border-bottom: 2px solid #1a1a1a;
    color: #555;
}

.status-text {
    display: flex;
    align-items: center;
    padding-left: 7px;
}

.macro-icon {
    align-self: center;
    margin-left: 20px;
}

.view-btns {
    display: flex;
    margin-left: auto;
}

.view-btn {
    width: 38px;
    display: flex;
    align-items: center;
    justify-content: center;
}

.view-on {
    background-color: #c6c6c6;
}

.zoom-ctl {
    display: flex;
    align-items: center;
    padding-left: 5px;
    padding-right: 8px;
}

.zoom-minus {
    width: 6px;
    height: 2px;
    background-color: #666;
}

.zoom-track {
    position: relative;
    width: 100px;
    height: 1px;
    margin: 0 5px 0 4px;
    background-color: #aaa;
}

.zoom-track i {
    position: absolute;
    left: 49px;
    top: -5px;
    width: 3px;
    height: 11px;
    background-color: #666;
}

.zoom-plus {
    width: 8px;
    height: 8px;
    background:
        linear-gradient(#666, #666) center / 8px 2px no-repeat,
        linear-gradient(#666, #666) center / 2px 8px no-repeat;
}

.zoom-val {
    margin-left: 17px;
    font-size: 12.5px;
    color: #666;
}

/* red annotations */
.cell-frame {
    position: absolute;
    left: 326px;
    top: 475px;
    width: 92px;
    height: 45px;
    padding: 1px 2px 1px 1px;
    background-color: #fff;
    border: 7px solid #ff2a00;
    border-radius: 3px;
}

.cell-select {
    position: relative;
    height: 100%;
    border: 2px solid #217346;
}

.cell-select i {
    position: absolute;
    right: -4px;
    bottom: -4px;
    width: 6px;
    height: 6px;
    background-color: #217346;
}

.badge {
    position: absolute;
    width: 42px;
    height: 42px;
    display: flex;
    align-items: center;
    justify-content: center;
    background-color: #fff;
    border-radius: 50%;
    box-shadow: 0 2px 3px rgba(0, 0, 0, 0.35);
}

.badge span {
    width: 35px;
    height: 35px;
    display: flex;
    align-items: center;
    justify-content: center;
    border: 1.5px solid #ff2a00;
    border-radius: 50%;
    color: #ff2a00;
    font-family: "Liberation Sans", sans-serif;
    font-size: 30px;
}

.badge b {
    transform: scaleX(0.7);
    letter-spacing: -1px;
}

.badge-13 {
    left: 350px;
    top: 522px;
}

.badge-14 {
    left: 960px;
    top: 407px;
}

/* chart */
.chart-frame {
    position: absolute;
    left: 448px;
    top: 250px;
    width: 505px;
    height: 394px;
    padding: 4px 5px 6px;
    background-color: #fff;
    border: 7px solid #ff2a00;
    border-top-width: 6px;
    border-radius: 3px;
}

.chart {
    height: 100%;
    padding-top: 13px;
    background-color: #fff;
    border: 1px solid #d9d9d9;
    color: #595959;
    font-feature-settings: normal;
}

.chart-title {
    display: flex;
    align-items: center;
    height: 24px;
    padding-left: 91px;
    font-size: 18.5px;
    color: #7f7f7f;
    white-space: nowrap;
}

.chart-title small {
    margin-left: 21px;
    font-size: 10.5px;
    color: #595959;
}

.chart-body {
    display: grid;
    grid-template-columns: 32px 421px;
    column-gap: 11px;
    margin-top: 19px;
}

.axis {
    height: 279px;
    margin-top: -1px;
    display: flex;
    flex-direction: column;
    justify-content: space-between;
    align-items: flex-end;
    font-size: 11px;
}

.axis span {
    height: 1px;
    line-height: 1px;
}

.plot {
    display: grid;
}

.gridlines, .bars {
    grid-area: 1 / 1;
}

.gridlines {
    height: 279px;
    display: flex;
    flex-direction: column;
    justify-content: space-between;
}

.gridlines i {
    height: 1px;
    background-color: #d9d9d9;
}

.bars {
    height: 277px;
    margin-top: 1px;
    display: flex;
}

.bar {
    flex: 1;
    display: flex;
    justify-content: center;
}

.stack {
    width: 45px;
    height: 100%;
    display: flex;
    flex-direction: column-reverse;
}

.seg {
    flex-shrink: 0;
    display: flex;
    flex-direction: column;
    align-items: center;
    justify-content: center;
    padding-top: 3px;
    line-height: 18.3px;
    font-size: 11.7px;
    color: #404040;
    text-align: center;
    white-space: nowrap;
}

.seg-mfg {
    background-color: #4472c4;
}

.seg-trade {
    background-color: #ed7d31;
}

.seg-edu {
    background-color: #a5a5a5;
}

.seg-gov {
    background-color: #ffc000;
}

.cats {
    grid-column: 2;
    display: flex;
    margin-top: 8px;
    line-height: 16px;
}

.cats span {
    flex: 1;
    text-align: center;
}
```
